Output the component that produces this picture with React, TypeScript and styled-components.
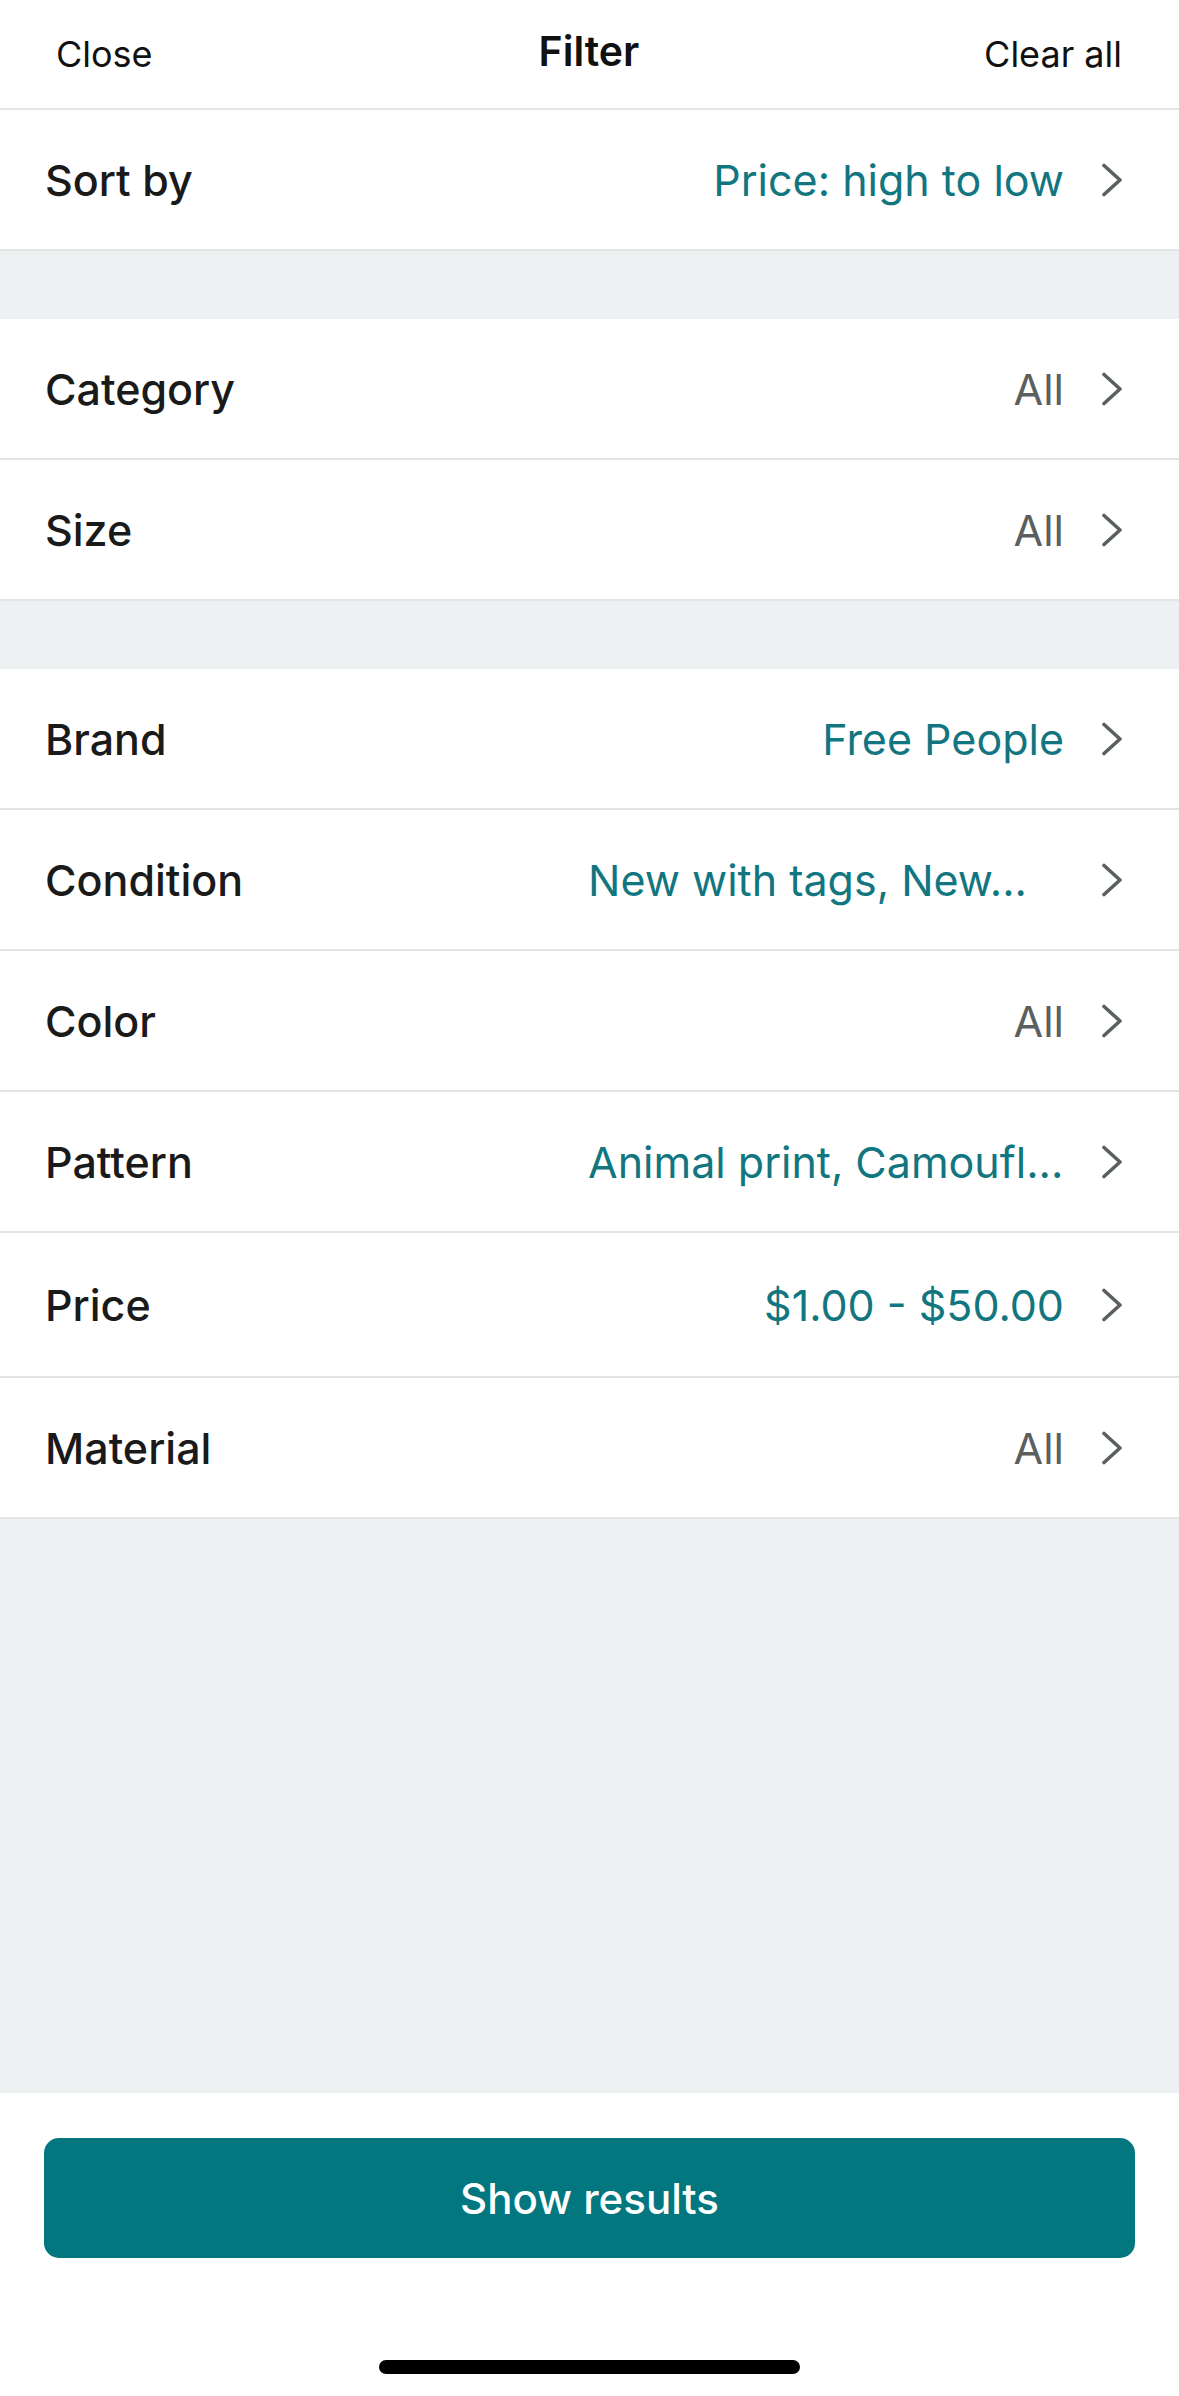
import React from 'react';
import styled, { createGlobalStyle } from 'styled-components';

const GlobalStyle = createGlobalStyle`
  html, body {
    margin: 0;
    padding: 0;
    background: #ffffff;
  }
  * {
    box-sizing: border-box;
  }
`;

const Screen = styled.div`
  min-height: 100vh;
  display: flex;
  flex-direction: column;
  font-family: Inter, 'Noto Sans', sans-serif;
  background: #eef1f2;
`;

const Header = styled.header`
  height: 110px;
  display: grid;
  grid-template-columns: 1fr auto 1fr;
  align-items: center;
  padding: 0 57px 6px 56px;
  background: #ffffff;
  border-bottom: 2px solid #e6e8e8;
`;

const HeaderLink = styled.span<{ $align: 'left' | 'right' }>`
  font-size: 36px;
  color: #111111;
  justify-self: ${p => (p.$align === 'left' ? 'start' : 'end')};
  padding-top: 6px;
`;

const Title = styled.h1`
  margin: 0;
  font-size: 41px;
  font-weight: 600;
  color: #111111;
`;

const GroupWrap = styled.div`
  display: flex;
  flex-direction: column;
  gap: 68px;
`;

const Group = styled.section`
  background: #ffffff;
`;

const Row = styled.div<{ $tall?: boolean }>`
  height: ${p => (p.$tall ? 145 : 141)}px;
  display: flex;
  align-items: center;
  padding: 0 56px 0 45px;
  border-bottom: 2px solid #e3e5e5;
`;

const Label = styled.span`
  font-size: 43px;
  font-weight: 500;
  color: #1a1a1a;
  flex: 1;
`;

const Value = styled.span<{ $active: boolean; $clipped: boolean }>`
  font-size: 43px;
  font-weight: 400;
  color: ${p => (p.$active ? '#127680' : '#5a6060')};
  white-space: nowrap;
  margin-right: 37px;
  width: ${p => (p.$clipped ? '476px' : 'auto')};
  text-align: left;
`;

const Filler = styled.div`
  flex: 1;
  background: #eef1f2;
`;

const Footer = styled.footer`
  height: 303px;
  background: #ffffff;
  display: flex;
  flex-direction: column;
  align-items: center;
  padding: 45px 44px 0;
`;

const ShowButton = styled.button`
  width: 100%;
  height: 120px;
  border: none;
  border-radius: 15px;
  background: #02777f;
  color: #ffffff;
  font-family: Inter, 'Noto Sans', sans-serif;
  font-size: 42px;
  font-weight: 500;
`;

const HomeIndicator = styled.div`
  margin-top: 102px;
  width: 421px;
  height: 14px;
  border-radius: 7px;
  background: #000000;
`;

const Chevron = () => (
  <svg width="22" height="34" viewBox="0 0 22 34" fill="none">
    <polyline
      points="3,2.5 19,17 3,31.5"
      stroke="#5a6060"
      strokeWidth="3.6"
      strokeLinecap="round"
      strokeLinejoin="round"
    />
  </svg>
);

interface FilterItem {
  label: string;
  value: string;
  active?: boolean;
  clipped?: boolean;
}

const groups: FilterItem[][] = [
  [{ label: 'Sort by', value: 'Price: high to low', active: true }],
  [
    { label: 'Category', value: 'All' },
    { label: 'Size', value: 'All' },
  ],
  [
    { label: 'Brand', value: 'Free People', active: true },
    { label: 'Condition', value: 'New with tags, New...', active: true, clipped: true },
    { label: 'Color', value: 'All' },
    { label: 'Pattern', value: 'Animal print, Camoufl...', active: true, clipped: true },
    { label: 'Price', value: '$1.00 - $50.00', active: true },
    { label: 'Material', value: 'All' },
  ],
];

const App = () => {
  return (
    <Screen>
      <GlobalStyle />
      <Header>
        <HeaderLink $align="left">Close</HeaderLink>
        <Title>Filter</Title>
        <HeaderLink $align="right">Clear all</HeaderLink>
      </Header>
      <GroupWrap>
        {groups.map((items, i) => (
          <Group key={i}>
            {items.map(item => (
              <Row key={item.label} $tall={item.label === 'Price'}>
                <Label>{item.label}</Label>
                <Value $active={!!item.active} $clipped={!!item.clipped}>
                  {item.value}
                </Value>
                <Chevron />
              </Row>
            ))}
          </Group>
        ))}
      </GroupWrap>
      <Filler />
      <Footer>
        <ShowButton type="button">Show results</ShowButton>
        <HomeIndicator />
      </Footer>
    </Screen>
  );
};

export default App;
